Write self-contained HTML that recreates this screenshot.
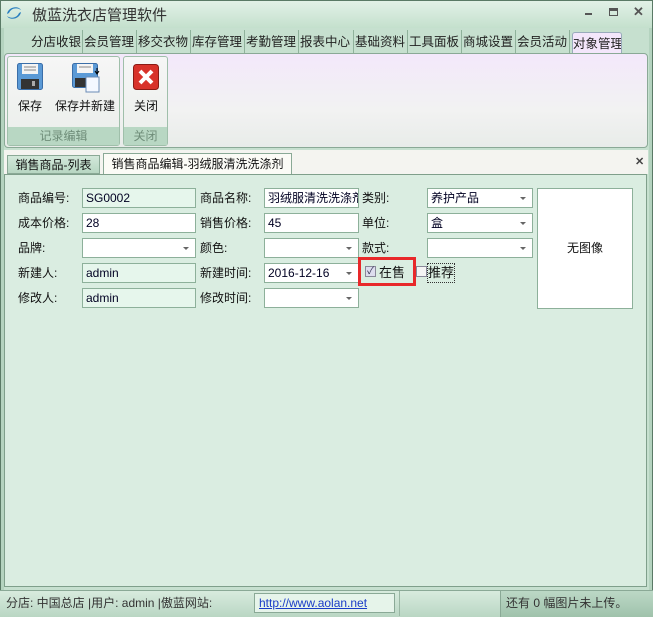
<!DOCTYPE html>
<html><head><meta charset="utf-8"><style>
*{margin:0;padding:0;box-sizing:border-box}
body{width:653px;height:617px;overflow:hidden;background:#c6e0cf;font-family:"Liberation Sans","Noto Sans CJK SC",sans-serif;font-size:12px;color:#111;position:relative}
.a{position:absolute}
.title{left:0;top:0;width:653px;height:28px;background:linear-gradient(#e2f1e7,#c4e0cd);border:1px solid #5a7a66;border-bottom:none}
.tab{top:30px;height:23px;font-size:12.5px;line-height:25px;color:#222;border-right:1px solid #8fb29b;padding-left:1px;white-space:nowrap;overflow:hidden}
.rib{left:4px;top:53px;width:644px;height:95px;background:linear-gradient(#f3e8fb,#f2f2f2 60%,#e8ece9);border:1px solid #8aa996;border-radius:4px}
.grp{top:56px;height:90px;border:1px solid #9fbfaa;border-radius:3px;background:linear-gradient(#f6f6f6,#eaeeea)}
.glab{left:0;bottom:0;width:100%;height:18px;background:#b8d7c3;color:#6f8d79;text-align:center;line-height:18px;font-size:12px}
.content{left:4px;top:174px;width:643px;height:413px;background:#daede1;border:1px solid #7f9f8b}
.lbl{font-size:12px;line-height:20px}
.in{height:20px;border:1px solid #8db09a;background:#e6f6ec;line-height:18px;padding-left:3px;font-size:12px;color:#002;overflow:hidden;white-space:nowrap}
.w{background:#fff}
.dd:after{content:"";position:absolute;right:6px;top:8px;border-left:3px solid transparent;border-right:3px solid transparent;border-top:3px solid #666}
.status{left:0;top:590px;width:653px;height:27px;background:linear-gradient(#d8ebde,#b9d6c3);border-top:1px solid #8aa996;line-height:26px;font-size:12px;color:#333}
</style></head><body>
<div class="a title"></div>
<svg class="a" style="left:5px;top:5px" width="18" height="16" viewBox="0 0 18 16"><path d="M2 9 C3 2,13 0,16 5 C12 2,6 3,4 8 Z" fill="#2a7fc0"/><path d="M16 7 C15 14,5 16,2 11 C6 14,12 13,14 8 Z" fill="#2a7fc0"/></svg>
<div class="a" style="left:32px;top:4px;font-size:15px;color:#333">傲蓝洗衣店管理软件</div>
<div class="a" style="left:585px;top:13px;width:7px;height:2px;background:#555"></div>
<div class="a" style="left:609px;top:8px;width:9px;height:8px;border:1px solid #555;border-top:3px solid #555"></div>
<div class="a" style="left:633px;top:4px;font-size:13px;font-weight:bold;color:#555">✕</div>
<div class="a" style="left:0;top:28px;width:4px;height:562px;background:#b4d3bf;border-left:1px solid #5a7a66"></div>
<div class="a" style="left:649px;top:28px;width:4px;height:562px;background:#b4d3bf;border-right:1px solid #5a7a66"></div>
<div class="a tab" style="left:30px;width:53px">分店收银</div>
<div class="a tab" style="left:83px;width:54px">会员管理</div>
<div class="a tab" style="left:137px;width:54px">移交衣物</div>
<div class="a tab" style="left:191px;width:54px">库存管理</div>
<div class="a tab" style="left:245px;width:54px">考勤管理</div>
<div class="a tab" style="left:299px;width:55px">报表中心</div>
<div class="a tab" style="left:354px;width:54px">基础资料</div>
<div class="a tab" style="left:408px;width:54px">工具面板</div>
<div class="a tab" style="left:462px;width:54px">商城设置</div>
<div class="a tab" style="left:516px;width:54px">会员活动</div>
<div class="a tab" style="left:572px;top:32px;width:50px;height:22px;background:#f3e6fb;border:1px solid #9ab;border-bottom:none;border-radius:3px 3px 0 0;padding-left:0;line-height:22px">对象管理</div>
<div class="a rib"></div>
<div class="a grp" style="left:7px;width:113px"><div class="a glab">记录编辑</div></div>
<div class="a grp" style="left:123px;width:45px"><div class="a glab">关闭</div></div>
<svg class="a" style="left:17px;top:63px" width="26" height="27" viewBox="0 0 26 27"><rect x="0.5" y="0.5" width="25" height="26" rx="2" fill="#5b9ad6" stroke="#3a6ea8"/><rect x="5" y="1" width="16" height="10" fill="#f4f4f4"/><line x1="7" y1="4" x2="19" y2="4" stroke="#888"/><line x1="7" y1="7" x2="19" y2="7" stroke="#888"/><rect x="4" y="16" width="18" height="10" fill="#333"/><rect x="15" y="18" width="3" height="5" fill="#aaa"/></svg>
<svg class="a" style="left:72px;top:63px" width="30" height="30" viewBox="0 0 30 30"><rect x="0.5" y="0.5" width="25" height="24" rx="2" fill="#5b9ad6" stroke="#3a6ea8"/><rect x="5" y="1" width="16" height="9" fill="#f4f4f4"/><line x1="7" y1="4" x2="19" y2="4" stroke="#888"/><rect x="3" y="15" width="16" height="9" fill="#333"/><rect x="14" y="14" width="13" height="15" fill="#f4f8ff" stroke="#6a8bb5"/><path d="M25 5 V10 M23 8 L25 11 L27 8" stroke="#000" fill="none"/></svg>
<svg class="a" style="left:133px;top:64px" width="26" height="26" viewBox="0 0 26 26"><rect x="0.5" y="0.5" width="25" height="25" rx="3" fill="#d8322a" stroke="#8a1a14"/><path d="M7 7 L19 19 M19 7 L7 19" stroke="#fff" stroke-width="4"/></svg>
<div class="a" style="left:18px;top:97px;font-size:12px">保存</div>
<div class="a" style="left:55px;top:97px;font-size:12px">保存并新建</div>
<div class="a" style="left:134px;top:97px;font-size:12px">关闭</div>
<div class="a" style="left:4px;top:150px;width:644px;height:24px;background:#f4f4f0"></div>
<div class="a" style="left:7px;top:155px;width:93px;height:19px;background:linear-gradient(#d2e8da,#b7d6c2);border:1px solid #8aa996;line-height:18px;text-align:center;font-size:12px">销售商品-列表</div>
<div class="a" style="left:103px;top:153px;width:189px;height:22px;background:#fbfbf6;border:1px solid #8aa996;border-bottom:none;line-height:21px;text-align:center;font-size:12px">销售商品编辑-羽绒服清洗洗涤剂</div>
<div class="a" style="left:635px;top:155px;font-size:11px;font-weight:bold;color:#444">✕</div>
<div class="a content"></div>

<div class="a lbl" style="left:18px;top:188px">商品编号:</div>
<div class="a in" style="left:82px;top:188px;width:114px">SG0002</div>
<div class="a lbl" style="left:200px;top:188px">商品名称:</div>
<div class="a in w" style="left:264px;top:188px;width:95px">羽绒服清洗洗涤剂</div>
<div class="a lbl" style="left:362px;top:188px">类别:</div>
<div class="a in w dd" style="left:427px;top:188px;width:106px">养护产品</div>
<div class="a" style="left:537px;top:188px;width:96px;height:121px;background:#fff;border:1px solid #8db09a;text-align:center;line-height:119px">无图像</div>

<div class="a lbl" style="left:18px;top:213px">成本价格:</div>
<div class="a in w" style="left:82px;top:213px;width:114px">28</div>
<div class="a lbl" style="left:200px;top:213px">销售价格:</div>
<div class="a in w" style="left:264px;top:213px;width:95px">45</div>
<div class="a lbl" style="left:362px;top:213px">单位:</div>
<div class="a in w dd" style="left:427px;top:213px;width:106px">盒</div>

<div class="a lbl" style="left:18px;top:238px">品牌:</div>
<div class="a in w dd" style="left:82px;top:238px;width:114px"></div>
<div class="a lbl" style="left:200px;top:238px">颜色:</div>
<div class="a in w dd" style="left:264px;top:238px;width:95px"></div>
<div class="a lbl" style="left:362px;top:238px">款式:</div>
<div class="a in w dd" style="left:427px;top:238px;width:106px"></div>

<div class="a lbl" style="left:18px;top:263px">新建人:</div>
<div class="a in" style="left:82px;top:263px;width:114px">admin</div>
<div class="a lbl" style="left:200px;top:263px">新建时间:</div>
<div class="a in w dd" style="left:264px;top:263px;width:95px">2016-12-16</div>
<div class="a" style="left:358px;top:257px;width:58px;height:29px;border:3px solid #e8282a"></div>
<div class="a" style="left:365px;top:266px;width:11px;height:11px;border:1px solid #889;background:#dde;font-size:10px;line-height:9px;color:#335;text-align:center">✓</div>
<div class="a lbl" style="left:379px;top:263px;font-size:13px">在售</div>
<div class="a" style="left:416px;top:266px;width:11px;height:11px;border:1px solid #889;background:#f4f4f4"></div>
<div class="a lbl" style="left:427px;top:263px;font-size:13px;border:1px dotted #333;line-height:17px;height:20px">推荐</div>

<div class="a lbl" style="left:18px;top:288px">修改人:</div>
<div class="a in" style="left:82px;top:288px;width:114px">admin</div>
<div class="a lbl" style="left:200px;top:288px">修改时间:</div>
<div class="a in w dd" style="left:264px;top:288px;width:95px"></div>

<div class="a status"></div>
<div class="a" style="left:6px;top:590px;line-height:26px;font-size:12px;color:#333">分店: 中国总店 |用户: admin |傲蓝网站:</div>
<div class="a" style="left:254px;top:593px;width:141px;height:20px;background:#e6f4ea;border:1px solid #8aa996;padding-left:4px;line-height:18px;color:#1a3cc8;text-decoration:underline">http://www.aolan.net</div>
<div class="a" style="left:399px;top:591px;width:1px;height:25px;background:#9ab7a4"></div>
<div class="a" style="left:500px;top:591px;width:153px;height:26px;background:linear-gradient(#bcd8c6,#9fc2ab);border-left:1px solid #8aa996;line-height:25px;padding-left:5px;color:#333">还有 0 幅图片未上传。</div>
</body></html>
